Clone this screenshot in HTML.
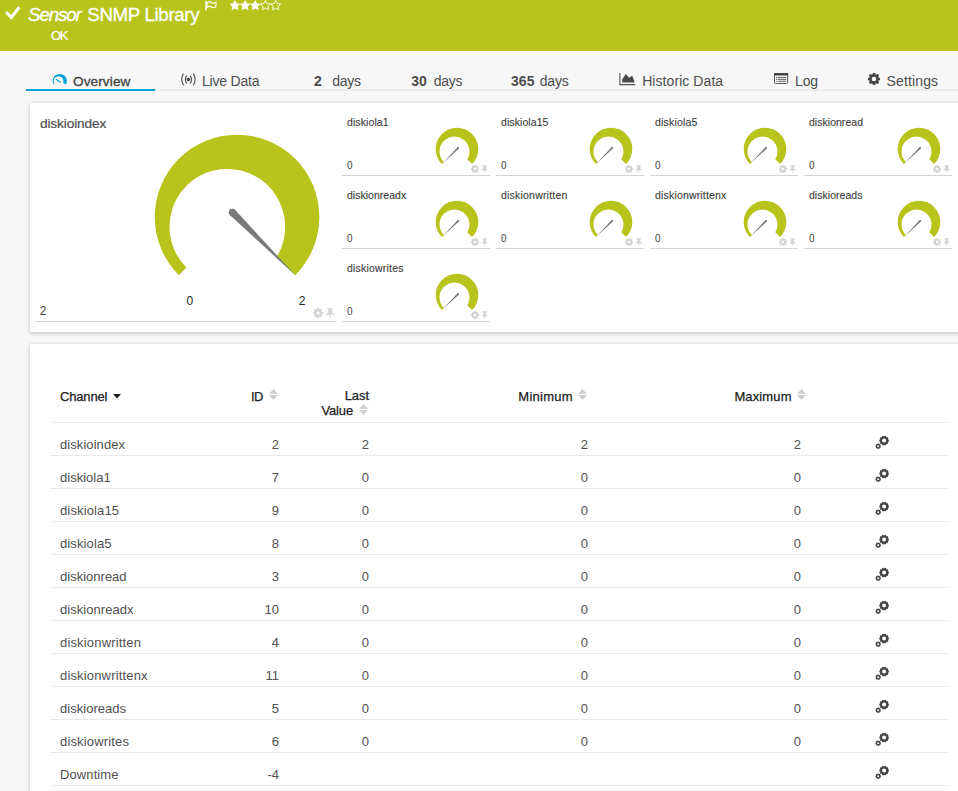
<!DOCTYPE html><html lang="en"><head><meta charset="utf-8"><title>Sensor SNMP Library</title><style>
*{box-sizing:border-box;margin:0;padding:0}
html,body{width:958px;height:791px;overflow:hidden}
body{background:#f7f7f7;font-family:"Liberation Sans",sans-serif;color:#4a4a4a;position:relative}
.t{position:absolute;white-space:nowrap;line-height:20px}
header{position:absolute;left:0;top:0;width:958px;height:51px;background:#b8c41b;color:#fff}
nav{position:absolute;left:0;top:51px;width:958px;height:40px}
nav .line{position:absolute;left:27px;top:38px;width:931px;height:2px;background:#ebebeb}
nav .active{position:absolute;left:26px;top:38px;width:129px;height:2px;background:#02a3da}
.card{position:absolute;background:#fff;box-shadow:0 1px 4px rgba(0,0,0,.24)}
#gauges{left:30px;top:103px;width:940px;height:229px}
#channels{left:30px;top:344px;width:940px;height:470px}
.uline{position:absolute;height:1px;background:#d1d3d5}
svg{position:absolute;overflow:visible}
table{position:absolute;left:20px;top:0;width:898px;border-collapse:collapse;table-layout:fixed;font-size:13px;color:#505050}
th,td{border-bottom:1px solid #e9e9e9;padding:0;white-space:nowrap;vertical-align:top;position:relative}
thead th{height:78.5px;font-weight:normal;color:#222;-webkit-text-stroke:.25px #222}
tbody td{height:33px}
</style></head><body>
<header>
<svg width="18" height="16" style="left:4px;top:6px" viewBox="0 0 18 16"><path d="M2.1 6.1 L7.4 11.5 L15.2 1.2" fill="none" stroke="#fff" stroke-width="3.1"/></svg>
<span class="t" style="top:4.90px;font-size:18.7px;left:28.00px;font-style:italic;letter-spacing:-1.075px;-webkit-text-stroke:.3px #fff;">Sensor</span>
<span class="t" style="top:4.90px;font-size:18.7px;left:87.30px;letter-spacing:-0.337px;-webkit-text-stroke:.3px #fff;">SNMP Library</span>
<svg width="12" height="11" style="left:205px;top:1px" viewBox="0 0 12 11"><path d="M1 0 V9.4" stroke="#fff" stroke-width="1.4" fill="none"/><path d="M2.1 1.7 C3.6 0.5 5.4 0.7 6.8 1.7 C8.1 2.6 9.6 2.2 10.9 1.2 V5.7 C9.6 6.7 8.1 7.1 6.8 6.2 C5.4 5.2 3.6 5 2.1 6.2 Z" fill="none" stroke="#fff" stroke-width="1.1"/></svg>
<svg width="60" height="12" style="left:228px;top:0px;overflow:hidden" viewBox="0 0 60 12"><polygon points="6.90,-0.10 8.60,3.25 12.32,3.84 9.66,6.50 10.25,10.21 6.90,8.50 3.55,10.21 4.14,6.50 1.48,3.84 5.20,3.25" fill="#fff"/><polygon points="17.10,-0.10 18.80,3.25 22.52,3.84 19.86,6.50 20.45,10.21 17.10,8.50 13.75,10.21 14.34,6.50 11.68,3.84 15.40,3.25" fill="#fff"/><polygon points="27.30,-0.10 29.00,3.25 32.72,3.84 30.06,6.50 30.65,10.21 27.30,8.50 23.95,10.21 24.54,6.50 21.88,3.84 25.60,3.25" fill="#fff"/><polygon points="37.50,0.40 39.03,3.50 42.45,3.99 39.97,6.40 40.56,9.81 37.50,8.20 34.44,9.81 35.03,6.40 32.55,3.99 35.97,3.50" fill="none" stroke="#fff" stroke-width="0.9"/><polygon points="47.70,0.40 49.23,3.50 52.65,3.99 50.17,6.40 50.76,9.81 47.70,8.20 44.64,9.81 45.23,6.40 42.75,3.99 46.17,3.50" fill="none" stroke="#fff" stroke-width="0.9"/></svg>
<span class="t" style="top:25.90px;font-size:13px;left:51.00px;letter-spacing:-1.391px;-webkit-text-stroke:.2px #fff;">OK</span>
</header>
<nav>
<div class="line"></div><div class="active"></div>
<span class="t" style="top:20.80px;font-size:13.6px;left:73.00px;color:#444;letter-spacing:0.103px;-webkit-text-stroke:.3px #444;">Overview</span>
<span class="t" style="top:20.30px;font-size:14px;left:202.00px;color:#4d4d4d;letter-spacing:-0.216px;">Live Data</span>
<span class="t" style="top:20.30px;font-size:14px;left:314.00px;font-weight:bold;color:#4d4d4d;">2</span>
<span class="t" style="top:20.30px;font-size:14px;left:332.20px;color:#4d4d4d;letter-spacing:-0.218px;">days</span>
<span class="t" style="top:20.30px;font-size:14px;left:411.30px;font-weight:bold;color:#4d4d4d;letter-spacing:-0.036px;">30</span>
<span class="t" style="top:20.30px;font-size:14px;left:433.70px;color:#4d4d4d;letter-spacing:-0.218px;">days</span>
<span class="t" style="top:20.30px;font-size:14px;left:511.00px;font-weight:bold;color:#4d4d4d;letter-spacing:0.047px;">365</span>
<span class="t" style="top:20.30px;font-size:14px;left:539.80px;color:#4d4d4d;letter-spacing:-0.218px;">days</span>
<span class="t" style="top:20.30px;font-size:14px;left:642.20px;color:#4d4d4d;letter-spacing:0.067px;">Historic Data</span>
<span class="t" style="top:20.30px;font-size:14px;left:795.00px;color:#4d4d4d;letter-spacing:-0.120px;">Log</span>
<span class="t" style="top:20.30px;font-size:14px;left:886.60px;color:#4d4d4d;letter-spacing:0.127px;">Settings</span>
<svg width="16" height="14" style="left:52px;top:22px" viewBox="52 73 16 14"><path d="M53.56 84.62 A7.15 7.15 0 1 1 65.94 84.62 L63.13 83.00 A4.90 4.90 0 1 0 54.54 84.06 Z" fill="#02a3da"/><path d="M55.9 79.3 L60.8 82.5" stroke="#02a3da" stroke-width="1.05"/></svg>
<svg width="16" height="13" style="left:180px;top:21.7px" viewBox="180 72.7 16 13"><circle cx="188.4" cy="79.2" r="1.8" fill="#4a4a4a"/><path d="M186.7 75.4 Q183.9 79.2 186.7 83 M190.1 75.4 Q192.9 79.2 190.1 83" fill="none" stroke="#555" stroke-width="1.25"/><path d="M183.5 73.4 Q179.7 79.2 183.5 85 M193.3 73.4 Q197.1 79.2 193.3 85" fill="none" stroke="#555" stroke-width="1.2"/></svg>
<svg width="17" height="13" style="left:619px;top:22.3px" viewBox="0 0 17 13"><path d="M0.9 0 V11.6 H16.3" fill="none" stroke="#555" stroke-width="1.1"/><path d="M3.2 9.6 V6.4 L6.7 1.1 L10.3 4.8 L13.1 2.6 L15.3 7.9 V9.6 Z" fill="#4a4a4a"/></svg>
<svg width="15" height="12" style="left:774.1px;top:21.9px" viewBox="0 0 15 12"><rect x="0.5" y="0.5" width="13.2" height="10" rx="1" fill="none" stroke="#555" stroke-width="1"/><rect x="0" y="0" width="14.2" height="2.5" rx=".8" fill="#444"/><path d="M2 4.5 H3.2 M3.9 4.5 H12.2 M2 6.4 H3.2 M3.9 6.4 H12.2 M2 8.3 H3.2 M3.9 8.3 H12.2" stroke="#555" stroke-width=".9"/></svg>
<svg width="14" height="14" style="left:867.3px;top:20.6px" viewBox="0 0 14 14"><path d="M13.08 5.80 L13.08 8.20 L11.71 8.36 L11.29 9.37 L12.15 10.45 L10.45 12.15 L9.37 11.29 L8.36 11.71 L8.20 13.08 L5.80 13.08 L5.64 11.71 L4.63 11.29 L3.55 12.15 L1.85 10.45 L2.71 9.37 L2.29 8.36 L0.92 8.20 L0.92 5.80 L2.29 5.64 L2.71 4.63 L1.85 3.55 L3.55 1.85 L4.63 2.71 L5.64 2.29 L5.80 0.92 L8.20 0.92 L8.36 2.29 L9.37 2.71 L10.45 1.85 L12.15 3.55 L11.29 4.63 L11.71 5.64 Z M4.70 7.00 a2.30 2.30 0 1 0 4.60 0 a2.30 2.30 0 1 0 -4.60 0 Z" fill="#444" fill-rule="evenodd"/></svg>
</nav>
<section class="card" id="gauges">
<span class="t" style="top:10.50px;font-size:13.7px;left:10.00px;color:#505050;letter-spacing:-0.143px;-webkit-text-stroke:.2px #505050;">diskioindex</span>
<svg width="300" height="200" style="left:0;top:0" viewBox="0 0 300 200">
<path d="M148.86 172.19 A82.30 82.30 0 1 1 265.24 172.19 L246.75 153.70 A57.80 57.80 0 1 0 156.46 164.59 Z" fill="#b8c41b"/>
<path d="M265.74 172.69 L204.96 106.75 L199.80 111.91 Z" fill="#7a7a78"/><circle cx="202.38" cy="109.33" r="3.65" fill="#7a7a78"/>
<text x="159.8" y="202.0" font-size="12" fill="#222" text-anchor="middle">0</text>
<text x="272.2" y="202.0" font-size="12" fill="#222" text-anchor="middle">2</text>
</svg>
<span class="t" style="top:198.00px;font-size:12px;left:9.80px;color:#444;">2</span>
<svg width="22.0" height="10.0" style="left:282.5px;top:205.2px" viewBox="0 0 22 10"><path d="M10.00 4.00 L10.00 6.00 L8.79 6.11 L8.47 6.89 L9.24 7.83 L7.83 9.24 L6.89 8.47 L6.11 8.79 L6.00 10.00 L4.00 10.00 L3.89 8.79 L3.11 8.47 L2.17 9.24 L0.76 7.83 L1.53 6.89 L1.21 6.11 L-0.00 6.00 L-0.00 4.00 L1.21 3.89 L1.53 3.11 L0.76 2.17 L2.17 0.76 L3.11 1.53 L3.89 1.21 L4.00 -0.00 L6.00 -0.00 L6.11 1.21 L6.89 1.53 L7.83 0.76 L9.24 2.17 L8.47 3.11 L8.79 3.89 Z M3.45 5.00 a1.55 1.55 0 1 0 3.10 0 a1.55 1.55 0 1 0 -3.10 0 Z" fill="#d4d4d4" fill-rule="evenodd"/><path d="M14.2 0.2 H20 V1.6 H19 V4.6 C20.2 5.2 20.8 6 20.8 6.8 H17.6 V10 H16.6 V6.8 H13.4 C13.4 6 14 5.2 15.2 4.6 V1.6 H14.2 Z" fill="#d4d4d4"/></svg>
<div class="uline" style="left:5px;top:218px;width:301px"></div>
<div class="uline" style="left:312.0px;top:72.0px;width:147.5px"></div>
<span class="t" style="top:9.00px;font-size:10.5px;left:317.00px;color:#3c3c3c;letter-spacing:0.094px;-webkit-text-stroke:.12px #3c3c3c;">diskiola1</span>
<span class="t" style="top:53.00px;font-size:10px;left:317.00px;color:#444;">0</span>
<svg width="60" height="60" style="left:397.00px;top:15.80px" viewBox="0 0 60 60">
<path d="M14.94 45.06 A21.30 21.30 0 1 1 45.06 45.06 L40.27 40.27 A14.96 14.96 0 1 0 16.91 43.09 Z" fill="#b8c41b"/>
<path d="M15.50 44.50 L31.84 29.43 L30.57 28.16 Z" fill="#707070"/><circle cx="31.20" cy="28.80" r="0.90" fill="#707070"/>
</svg>
<svg width="17.6" height="8.0" style="left:441.0px;top:62.0px" viewBox="0 0 22 10"><path d="M10.00 4.00 L10.00 6.00 L8.79 6.11 L8.47 6.89 L9.24 7.83 L7.83 9.24 L6.89 8.47 L6.11 8.79 L6.00 10.00 L4.00 10.00 L3.89 8.79 L3.11 8.47 L2.17 9.24 L0.76 7.83 L1.53 6.89 L1.21 6.11 L-0.00 6.00 L-0.00 4.00 L1.21 3.89 L1.53 3.11 L0.76 2.17 L2.17 0.76 L3.11 1.53 L3.89 1.21 L4.00 -0.00 L6.00 -0.00 L6.11 1.21 L6.89 1.53 L7.83 0.76 L9.24 2.17 L8.47 3.11 L8.79 3.89 Z M3.45 5.00 a1.55 1.55 0 1 0 3.10 0 a1.55 1.55 0 1 0 -3.10 0 Z" fill="#d4d4d4" fill-rule="evenodd"/><path d="M14.2 0.2 H20 V1.6 H19 V4.6 C20.2 5.2 20.8 6 20.8 6.8 H17.6 V10 H16.6 V6.8 H13.4 C13.4 6 14 5.2 15.2 4.6 V1.6 H14.2 Z" fill="#d4d4d4"/></svg>
<div class="uline" style="left:466.0px;top:72.0px;width:147.5px"></div>
<span class="t" style="top:9.00px;font-size:10.5px;left:471.00px;color:#3c3c3c;letter-spacing:0.080px;-webkit-text-stroke:.12px #3c3c3c;">diskiola15</span>
<span class="t" style="top:53.00px;font-size:10px;left:471.00px;color:#444;">0</span>
<svg width="60" height="60" style="left:551.00px;top:15.80px" viewBox="0 0 60 60">
<path d="M14.94 45.06 A21.30 21.30 0 1 1 45.06 45.06 L40.27 40.27 A14.96 14.96 0 1 0 16.91 43.09 Z" fill="#b8c41b"/>
<path d="M15.50 44.50 L31.84 29.43 L30.57 28.16 Z" fill="#707070"/><circle cx="31.20" cy="28.80" r="0.90" fill="#707070"/>
</svg>
<svg width="17.6" height="8.0" style="left:595.0px;top:62.0px" viewBox="0 0 22 10"><path d="M10.00 4.00 L10.00 6.00 L8.79 6.11 L8.47 6.89 L9.24 7.83 L7.83 9.24 L6.89 8.47 L6.11 8.79 L6.00 10.00 L4.00 10.00 L3.89 8.79 L3.11 8.47 L2.17 9.24 L0.76 7.83 L1.53 6.89 L1.21 6.11 L-0.00 6.00 L-0.00 4.00 L1.21 3.89 L1.53 3.11 L0.76 2.17 L2.17 0.76 L3.11 1.53 L3.89 1.21 L4.00 -0.00 L6.00 -0.00 L6.11 1.21 L6.89 1.53 L7.83 0.76 L9.24 2.17 L8.47 3.11 L8.79 3.89 Z M3.45 5.00 a1.55 1.55 0 1 0 3.10 0 a1.55 1.55 0 1 0 -3.10 0 Z" fill="#d4d4d4" fill-rule="evenodd"/><path d="M14.2 0.2 H20 V1.6 H19 V4.6 C20.2 5.2 20.8 6 20.8 6.8 H17.6 V10 H16.6 V6.8 H13.4 C13.4 6 14 5.2 15.2 4.6 V1.6 H14.2 Z" fill="#d4d4d4"/></svg>
<div class="uline" style="left:620.0px;top:72.0px;width:147.5px"></div>
<span class="t" style="top:9.00px;font-size:10.5px;left:625.00px;color:#3c3c3c;letter-spacing:0.183px;-webkit-text-stroke:.12px #3c3c3c;">diskiola5</span>
<span class="t" style="top:53.00px;font-size:10px;left:625.00px;color:#444;">0</span>
<svg width="60" height="60" style="left:705.00px;top:15.80px" viewBox="0 0 60 60">
<path d="M14.94 45.06 A21.30 21.30 0 1 1 45.06 45.06 L40.27 40.27 A14.96 14.96 0 1 0 16.91 43.09 Z" fill="#b8c41b"/>
<path d="M15.50 44.50 L31.84 29.43 L30.57 28.16 Z" fill="#707070"/><circle cx="31.20" cy="28.80" r="0.90" fill="#707070"/>
</svg>
<svg width="17.6" height="8.0" style="left:749.0px;top:62.0px" viewBox="0 0 22 10"><path d="M10.00 4.00 L10.00 6.00 L8.79 6.11 L8.47 6.89 L9.24 7.83 L7.83 9.24 L6.89 8.47 L6.11 8.79 L6.00 10.00 L4.00 10.00 L3.89 8.79 L3.11 8.47 L2.17 9.24 L0.76 7.83 L1.53 6.89 L1.21 6.11 L-0.00 6.00 L-0.00 4.00 L1.21 3.89 L1.53 3.11 L0.76 2.17 L2.17 0.76 L3.11 1.53 L3.89 1.21 L4.00 -0.00 L6.00 -0.00 L6.11 1.21 L6.89 1.53 L7.83 0.76 L9.24 2.17 L8.47 3.11 L8.79 3.89 Z M3.45 5.00 a1.55 1.55 0 1 0 3.10 0 a1.55 1.55 0 1 0 -3.10 0 Z" fill="#d4d4d4" fill-rule="evenodd"/><path d="M14.2 0.2 H20 V1.6 H19 V4.6 C20.2 5.2 20.8 6 20.8 6.8 H17.6 V10 H16.6 V6.8 H13.4 C13.4 6 14 5.2 15.2 4.6 V1.6 H14.2 Z" fill="#d4d4d4"/></svg>
<div class="uline" style="left:774.0px;top:72.0px;width:147.5px"></div>
<span class="t" style="top:9.00px;font-size:10.5px;left:779.00px;color:#3c3c3c;letter-spacing:0.027px;-webkit-text-stroke:.12px #3c3c3c;">diskionread</span>
<span class="t" style="top:53.00px;font-size:10px;left:779.00px;color:#444;">0</span>
<svg width="60" height="60" style="left:859.00px;top:15.80px" viewBox="0 0 60 60">
<path d="M14.94 45.06 A21.30 21.30 0 1 1 45.06 45.06 L40.27 40.27 A14.96 14.96 0 1 0 16.91 43.09 Z" fill="#b8c41b"/>
<path d="M15.50 44.50 L31.84 29.43 L30.57 28.16 Z" fill="#707070"/><circle cx="31.20" cy="28.80" r="0.90" fill="#707070"/>
</svg>
<svg width="17.6" height="8.0" style="left:903.0px;top:62.0px" viewBox="0 0 22 10"><path d="M10.00 4.00 L10.00 6.00 L8.79 6.11 L8.47 6.89 L9.24 7.83 L7.83 9.24 L6.89 8.47 L6.11 8.79 L6.00 10.00 L4.00 10.00 L3.89 8.79 L3.11 8.47 L2.17 9.24 L0.76 7.83 L1.53 6.89 L1.21 6.11 L-0.00 6.00 L-0.00 4.00 L1.21 3.89 L1.53 3.11 L0.76 2.17 L2.17 0.76 L3.11 1.53 L3.89 1.21 L4.00 -0.00 L6.00 -0.00 L6.11 1.21 L6.89 1.53 L7.83 0.76 L9.24 2.17 L8.47 3.11 L8.79 3.89 Z M3.45 5.00 a1.55 1.55 0 1 0 3.10 0 a1.55 1.55 0 1 0 -3.10 0 Z" fill="#d4d4d4" fill-rule="evenodd"/><path d="M14.2 0.2 H20 V1.6 H19 V4.6 C20.2 5.2 20.8 6 20.8 6.8 H17.6 V10 H16.6 V6.8 H13.4 C13.4 6 14 5.2 15.2 4.6 V1.6 H14.2 Z" fill="#d4d4d4"/></svg>
<div class="uline" style="left:312.0px;top:145.0px;width:147.5px"></div>
<span class="t" style="top:82.00px;font-size:10.5px;left:317.00px;color:#3c3c3c;letter-spacing:0.021px;-webkit-text-stroke:.12px #3c3c3c;">diskionreadx</span>
<span class="t" style="top:126.00px;font-size:10px;left:317.00px;color:#444;">0</span>
<svg width="60" height="60" style="left:397.00px;top:88.80px" viewBox="0 0 60 60">
<path d="M14.94 45.06 A21.30 21.30 0 1 1 45.06 45.06 L40.27 40.27 A14.96 14.96 0 1 0 16.91 43.09 Z" fill="#b8c41b"/>
<path d="M15.50 44.50 L31.84 29.43 L30.57 28.16 Z" fill="#707070"/><circle cx="31.20" cy="28.80" r="0.90" fill="#707070"/>
</svg>
<svg width="17.6" height="8.0" style="left:441.0px;top:135.0px" viewBox="0 0 22 10"><path d="M10.00 4.00 L10.00 6.00 L8.79 6.11 L8.47 6.89 L9.24 7.83 L7.83 9.24 L6.89 8.47 L6.11 8.79 L6.00 10.00 L4.00 10.00 L3.89 8.79 L3.11 8.47 L2.17 9.24 L0.76 7.83 L1.53 6.89 L1.21 6.11 L-0.00 6.00 L-0.00 4.00 L1.21 3.89 L1.53 3.11 L0.76 2.17 L2.17 0.76 L3.11 1.53 L3.89 1.21 L4.00 -0.00 L6.00 -0.00 L6.11 1.21 L6.89 1.53 L7.83 0.76 L9.24 2.17 L8.47 3.11 L8.79 3.89 Z M3.45 5.00 a1.55 1.55 0 1 0 3.10 0 a1.55 1.55 0 1 0 -3.10 0 Z" fill="#d4d4d4" fill-rule="evenodd"/><path d="M14.2 0.2 H20 V1.6 H19 V4.6 C20.2 5.2 20.8 6 20.8 6.8 H17.6 V10 H16.6 V6.8 H13.4 C13.4 6 14 5.2 15.2 4.6 V1.6 H14.2 Z" fill="#d4d4d4"/></svg>
<div class="uline" style="left:466.0px;top:145.0px;width:147.5px"></div>
<span class="t" style="top:82.00px;font-size:10.5px;left:471.00px;color:#3c3c3c;letter-spacing:0.206px;-webkit-text-stroke:.12px #3c3c3c;">diskionwritten</span>
<span class="t" style="top:126.00px;font-size:10px;left:471.00px;color:#444;">0</span>
<svg width="60" height="60" style="left:551.00px;top:88.80px" viewBox="0 0 60 60">
<path d="M14.94 45.06 A21.30 21.30 0 1 1 45.06 45.06 L40.27 40.27 A14.96 14.96 0 1 0 16.91 43.09 Z" fill="#b8c41b"/>
<path d="M15.50 44.50 L31.84 29.43 L30.57 28.16 Z" fill="#707070"/><circle cx="31.20" cy="28.80" r="0.90" fill="#707070"/>
</svg>
<svg width="17.6" height="8.0" style="left:595.0px;top:135.0px" viewBox="0 0 22 10"><path d="M10.00 4.00 L10.00 6.00 L8.79 6.11 L8.47 6.89 L9.24 7.83 L7.83 9.24 L6.89 8.47 L6.11 8.79 L6.00 10.00 L4.00 10.00 L3.89 8.79 L3.11 8.47 L2.17 9.24 L0.76 7.83 L1.53 6.89 L1.21 6.11 L-0.00 6.00 L-0.00 4.00 L1.21 3.89 L1.53 3.11 L0.76 2.17 L2.17 0.76 L3.11 1.53 L3.89 1.21 L4.00 -0.00 L6.00 -0.00 L6.11 1.21 L6.89 1.53 L7.83 0.76 L9.24 2.17 L8.47 3.11 L8.79 3.89 Z M3.45 5.00 a1.55 1.55 0 1 0 3.10 0 a1.55 1.55 0 1 0 -3.10 0 Z" fill="#d4d4d4" fill-rule="evenodd"/><path d="M14.2 0.2 H20 V1.6 H19 V4.6 C20.2 5.2 20.8 6 20.8 6.8 H17.6 V10 H16.6 V6.8 H13.4 C13.4 6 14 5.2 15.2 4.6 V1.6 H14.2 Z" fill="#d4d4d4"/></svg>
<div class="uline" style="left:620.0px;top:145.0px;width:147.5px"></div>
<span class="t" style="top:82.00px;font-size:10.5px;left:625.00px;color:#3c3c3c;letter-spacing:0.176px;-webkit-text-stroke:.12px #3c3c3c;">diskionwrittenx</span>
<span class="t" style="top:126.00px;font-size:10px;left:625.00px;color:#444;">0</span>
<svg width="60" height="60" style="left:705.00px;top:88.80px" viewBox="0 0 60 60">
<path d="M14.94 45.06 A21.30 21.30 0 1 1 45.06 45.06 L40.27 40.27 A14.96 14.96 0 1 0 16.91 43.09 Z" fill="#b8c41b"/>
<path d="M15.50 44.50 L31.84 29.43 L30.57 28.16 Z" fill="#707070"/><circle cx="31.20" cy="28.80" r="0.90" fill="#707070"/>
</svg>
<svg width="17.6" height="8.0" style="left:749.0px;top:135.0px" viewBox="0 0 22 10"><path d="M10.00 4.00 L10.00 6.00 L8.79 6.11 L8.47 6.89 L9.24 7.83 L7.83 9.24 L6.89 8.47 L6.11 8.79 L6.00 10.00 L4.00 10.00 L3.89 8.79 L3.11 8.47 L2.17 9.24 L0.76 7.83 L1.53 6.89 L1.21 6.11 L-0.00 6.00 L-0.00 4.00 L1.21 3.89 L1.53 3.11 L0.76 2.17 L2.17 0.76 L3.11 1.53 L3.89 1.21 L4.00 -0.00 L6.00 -0.00 L6.11 1.21 L6.89 1.53 L7.83 0.76 L9.24 2.17 L8.47 3.11 L8.79 3.89 Z M3.45 5.00 a1.55 1.55 0 1 0 3.10 0 a1.55 1.55 0 1 0 -3.10 0 Z" fill="#d4d4d4" fill-rule="evenodd"/><path d="M14.2 0.2 H20 V1.6 H19 V4.6 C20.2 5.2 20.8 6 20.8 6.8 H17.6 V10 H16.6 V6.8 H13.4 C13.4 6 14 5.2 15.2 4.6 V1.6 H14.2 Z" fill="#d4d4d4"/></svg>
<div class="uline" style="left:774.0px;top:145.0px;width:147.5px"></div>
<span class="t" style="top:82.00px;font-size:10.5px;left:779.00px;color:#3c3c3c;letter-spacing:0.035px;-webkit-text-stroke:.12px #3c3c3c;">diskioreads</span>
<span class="t" style="top:126.00px;font-size:10px;left:779.00px;color:#444;">0</span>
<svg width="60" height="60" style="left:859.00px;top:88.80px" viewBox="0 0 60 60">
<path d="M14.94 45.06 A21.30 21.30 0 1 1 45.06 45.06 L40.27 40.27 A14.96 14.96 0 1 0 16.91 43.09 Z" fill="#b8c41b"/>
<path d="M15.50 44.50 L31.84 29.43 L30.57 28.16 Z" fill="#707070"/><circle cx="31.20" cy="28.80" r="0.90" fill="#707070"/>
</svg>
<svg width="17.6" height="8.0" style="left:903.0px;top:135.0px" viewBox="0 0 22 10"><path d="M10.00 4.00 L10.00 6.00 L8.79 6.11 L8.47 6.89 L9.24 7.83 L7.83 9.24 L6.89 8.47 L6.11 8.79 L6.00 10.00 L4.00 10.00 L3.89 8.79 L3.11 8.47 L2.17 9.24 L0.76 7.83 L1.53 6.89 L1.21 6.11 L-0.00 6.00 L-0.00 4.00 L1.21 3.89 L1.53 3.11 L0.76 2.17 L2.17 0.76 L3.11 1.53 L3.89 1.21 L4.00 -0.00 L6.00 -0.00 L6.11 1.21 L6.89 1.53 L7.83 0.76 L9.24 2.17 L8.47 3.11 L8.79 3.89 Z M3.45 5.00 a1.55 1.55 0 1 0 3.10 0 a1.55 1.55 0 1 0 -3.10 0 Z" fill="#d4d4d4" fill-rule="evenodd"/><path d="M14.2 0.2 H20 V1.6 H19 V4.6 C20.2 5.2 20.8 6 20.8 6.8 H17.6 V10 H16.6 V6.8 H13.4 C13.4 6 14 5.2 15.2 4.6 V1.6 H14.2 Z" fill="#d4d4d4"/></svg>
<div class="uline" style="left:312.0px;top:218.0px;width:147.5px"></div>
<span class="t" style="top:155.00px;font-size:10.5px;left:317.00px;color:#3c3c3c;letter-spacing:0.203px;-webkit-text-stroke:.12px #3c3c3c;">diskiowrites</span>
<span class="t" style="top:199.00px;font-size:10px;left:317.00px;color:#444;">0</span>
<svg width="60" height="60" style="left:397.00px;top:161.80px" viewBox="0 0 60 60">
<path d="M14.94 45.06 A21.30 21.30 0 1 1 45.06 45.06 L40.27 40.27 A14.96 14.96 0 1 0 16.91 43.09 Z" fill="#b8c41b"/>
<path d="M15.50 44.50 L31.84 29.43 L30.57 28.16 Z" fill="#707070"/><circle cx="31.20" cy="28.80" r="0.90" fill="#707070"/>
</svg>
<svg width="17.6" height="8.0" style="left:441.0px;top:208.0px" viewBox="0 0 22 10"><path d="M10.00 4.00 L10.00 6.00 L8.79 6.11 L8.47 6.89 L9.24 7.83 L7.83 9.24 L6.89 8.47 L6.11 8.79 L6.00 10.00 L4.00 10.00 L3.89 8.79 L3.11 8.47 L2.17 9.24 L0.76 7.83 L1.53 6.89 L1.21 6.11 L-0.00 6.00 L-0.00 4.00 L1.21 3.89 L1.53 3.11 L0.76 2.17 L2.17 0.76 L3.11 1.53 L3.89 1.21 L4.00 -0.00 L6.00 -0.00 L6.11 1.21 L6.89 1.53 L7.83 0.76 L9.24 2.17 L8.47 3.11 L8.79 3.89 Z M3.45 5.00 a1.55 1.55 0 1 0 3.10 0 a1.55 1.55 0 1 0 -3.10 0 Z" fill="#d4d4d4" fill-rule="evenodd"/><path d="M14.2 0.2 H20 V1.6 H19 V4.6 C20.2 5.2 20.8 6 20.8 6.8 H17.6 V10 H16.6 V6.8 H13.4 C13.4 6 14 5.2 15.2 4.6 V1.6 H14.2 Z" fill="#d4d4d4"/></svg>
</section>
<section class="card" id="channels">
<table><colgroup><col style="width:160px"><col style="width:69px"><col style="width:90px"><col style="width:219px"><col style="width:218px"><col style="width:142px"></colgroup>
<thead><tr>
<th style="text-align:left;padding:44.5px 0 0 10px"><span style="letter-spacing:-0.175px;margin-right:0.175px">Channel</span><svg width="8" height="5" style="position:relative;display:inline-block;vertical-align:1.5px;margin-left:5.5px" viewBox="0 0 8 5"><path d="M0 0 L8 0 L4 4.4 Z" fill="#222"/></svg></th>
<th style="text-align:right;padding:44.5px 1px 0 0"><span style="letter-spacing:-0.500px;margin-right:0.500px">ID</span><svg width="9" height="11" style="position:relative;display:inline-block;vertical-align:0.3px;margin-left:5.5px" viewBox="0 0 9 11"><path d="M0 4.9 L4.5 0 L9 4.9 Z M0 6.1 L4.5 11 L9 6.1 Z" fill="#cfcfcf"/></svg></th>
<th style="text-align:right;padding:45.3px 1.4px 0 0;line-height:14.5px"><span style="margin-right:-1.4px"><span style="letter-spacing:-0.093px;margin-right:0.093px">Last</span></span><br><span style="letter-spacing:-0.137px;margin-right:0.137px">Value</span><svg width="9" height="11" style="position:relative;display:inline-block;vertical-align:0.3px;margin-left:5.5px" viewBox="0 0 9 11"><path d="M0 4.9 L4.5 0 L9 4.9 Z M0 6.1 L4.5 11 L9 6.1 Z" fill="#cfcfcf"/></svg></th>
<th style="text-align:right;padding:44.5px 0.9px 0 0"><span style="letter-spacing:0.254px;margin-right:-0.254px">Minimum</span><svg width="9" height="11" style="position:relative;display:inline-block;vertical-align:0.3px;margin-left:5.5px" viewBox="0 0 9 11"><path d="M0 4.9 L4.5 0 L9 4.9 Z M0 6.1 L4.5 11 L9 6.1 Z" fill="#cfcfcf"/></svg></th>
<th style="text-align:right;padding:44.5px 0 0 0"><span style="letter-spacing:0.123px;margin-right:-0.123px">Maximum</span><svg width="9" height="11" style="position:relative;display:inline-block;vertical-align:0.3px;margin-left:5.5px" viewBox="0 0 9 11"><path d="M0 4.9 L4.5 0 L9 4.9 Z M0 6.1 L4.5 11 L9 6.1 Z" fill="#cfcfcf"/></svg></th>
<th></th>
</tr></thead><tbody>
<tr><td style="padding:13.5px 0 0 10px"><span style="letter-spacing:0.071px">diskioindex</span></td><td style="text-align:right;padding:13.5px 0 0">2</td><td style="text-align:right;padding:13.5px 0 0">2</td><td style="text-align:right;padding:13.5px 0 0">2</td><td style="text-align:right;padding:13.5px 5px 0 0">2</td><td><svg width="16" height="16" style="left:67px;top:11px" viewBox="0 0 16 16"><path d="M15.93 5.77 L15.93 7.43 L15.08 7.59 L14.90 8.13 L15.49 8.77 L14.52 10.11 L13.73 9.74 L13.28 10.08 L13.38 10.94 L11.81 11.45 L11.38 10.69 L10.82 10.69 L10.39 11.45 L8.82 10.94 L8.92 10.08 L8.47 9.74 L7.68 10.11 L6.71 8.77 L7.30 8.13 L7.12 7.59 L6.27 7.43 L6.27 5.77 L7.12 5.61 L7.30 5.07 L6.71 4.43 L7.68 3.09 L8.47 3.46 L8.92 3.12 L8.82 2.26 L10.39 1.75 L10.82 2.51 L11.38 2.51 L11.81 1.75 L13.38 2.26 L13.28 3.12 L13.73 3.46 L14.52 3.09 L15.49 4.43 L14.90 5.07 L15.08 5.61 Z M9.10 6.60 a2.00 2.00 0 1 0 4.00 0 a2.00 2.00 0 1 0 -4.00 0 Z" fill="#444" fill-rule="evenodd"/><path d="M7.94 11.61 L7.94 12.79 L7.35 12.88 L7.20 13.24 L7.55 13.72 L6.72 14.55 L6.24 14.20 L5.88 14.35 L5.79 14.94 L4.61 14.94 L4.52 14.35 L4.16 14.20 L3.68 14.55 L2.85 13.72 L3.20 13.24 L3.05 12.88 L2.46 12.79 L2.46 11.61 L3.05 11.52 L3.20 11.16 L2.85 10.68 L3.68 9.85 L4.16 10.20 L4.52 10.05 L4.61 9.46 L5.79 9.46 L5.88 10.05 L6.24 10.20 L6.72 9.85 L7.55 10.68 L7.20 11.16 L7.35 11.52 Z M4.20 12.20 a1.00 1.00 0 1 0 2.00 0 a1.00 1.00 0 1 0 -2.00 0 Z" fill="#444" fill-rule="evenodd"/></svg></td></tr>
<tr><td style="padding:13.5px 0 0 10px"><span style="letter-spacing:0.013px">diskiola1</span></td><td style="text-align:right;padding:13.5px 0 0">7</td><td style="text-align:right;padding:13.5px 0 0">0</td><td style="text-align:right;padding:13.5px 0 0">0</td><td style="text-align:right;padding:13.5px 5px 0 0">0</td><td><svg width="16" height="16" style="left:67px;top:11px" viewBox="0 0 16 16"><path d="M15.93 5.77 L15.93 7.43 L15.08 7.59 L14.90 8.13 L15.49 8.77 L14.52 10.11 L13.73 9.74 L13.28 10.08 L13.38 10.94 L11.81 11.45 L11.38 10.69 L10.82 10.69 L10.39 11.45 L8.82 10.94 L8.92 10.08 L8.47 9.74 L7.68 10.11 L6.71 8.77 L7.30 8.13 L7.12 7.59 L6.27 7.43 L6.27 5.77 L7.12 5.61 L7.30 5.07 L6.71 4.43 L7.68 3.09 L8.47 3.46 L8.92 3.12 L8.82 2.26 L10.39 1.75 L10.82 2.51 L11.38 2.51 L11.81 1.75 L13.38 2.26 L13.28 3.12 L13.73 3.46 L14.52 3.09 L15.49 4.43 L14.90 5.07 L15.08 5.61 Z M9.10 6.60 a2.00 2.00 0 1 0 4.00 0 a2.00 2.00 0 1 0 -4.00 0 Z" fill="#444" fill-rule="evenodd"/><path d="M7.94 11.61 L7.94 12.79 L7.35 12.88 L7.20 13.24 L7.55 13.72 L6.72 14.55 L6.24 14.20 L5.88 14.35 L5.79 14.94 L4.61 14.94 L4.52 14.35 L4.16 14.20 L3.68 14.55 L2.85 13.72 L3.20 13.24 L3.05 12.88 L2.46 12.79 L2.46 11.61 L3.05 11.52 L3.20 11.16 L2.85 10.68 L3.68 9.85 L4.16 10.20 L4.52 10.05 L4.61 9.46 L5.79 9.46 L5.88 10.05 L6.24 10.20 L6.72 9.85 L7.55 10.68 L7.20 11.16 L7.35 11.52 Z M4.20 12.20 a1.00 1.00 0 1 0 2.00 0 a1.00 1.00 0 1 0 -2.00 0 Z" fill="#444" fill-rule="evenodd"/></svg></td></tr>
<tr><td style="padding:13.5px 0 0 10px"><span style="letter-spacing:0.129px">diskiola15</span></td><td style="text-align:right;padding:13.5px 0 0">9</td><td style="text-align:right;padding:13.5px 0 0">0</td><td style="text-align:right;padding:13.5px 0 0">0</td><td style="text-align:right;padding:13.5px 5px 0 0">0</td><td><svg width="16" height="16" style="left:67px;top:11px" viewBox="0 0 16 16"><path d="M15.93 5.77 L15.93 7.43 L15.08 7.59 L14.90 8.13 L15.49 8.77 L14.52 10.11 L13.73 9.74 L13.28 10.08 L13.38 10.94 L11.81 11.45 L11.38 10.69 L10.82 10.69 L10.39 11.45 L8.82 10.94 L8.92 10.08 L8.47 9.74 L7.68 10.11 L6.71 8.77 L7.30 8.13 L7.12 7.59 L6.27 7.43 L6.27 5.77 L7.12 5.61 L7.30 5.07 L6.71 4.43 L7.68 3.09 L8.47 3.46 L8.92 3.12 L8.82 2.26 L10.39 1.75 L10.82 2.51 L11.38 2.51 L11.81 1.75 L13.38 2.26 L13.28 3.12 L13.73 3.46 L14.52 3.09 L15.49 4.43 L14.90 5.07 L15.08 5.61 Z M9.10 6.60 a2.00 2.00 0 1 0 4.00 0 a2.00 2.00 0 1 0 -4.00 0 Z" fill="#444" fill-rule="evenodd"/><path d="M7.94 11.61 L7.94 12.79 L7.35 12.88 L7.20 13.24 L7.55 13.72 L6.72 14.55 L6.24 14.20 L5.88 14.35 L5.79 14.94 L4.61 14.94 L4.52 14.35 L4.16 14.20 L3.68 14.55 L2.85 13.72 L3.20 13.24 L3.05 12.88 L2.46 12.79 L2.46 11.61 L3.05 11.52 L3.20 11.16 L2.85 10.68 L3.68 9.85 L4.16 10.20 L4.52 10.05 L4.61 9.46 L5.79 9.46 L5.88 10.05 L6.24 10.20 L6.72 9.85 L7.55 10.68 L7.20 11.16 L7.35 11.52 Z M4.20 12.20 a1.00 1.00 0 1 0 2.00 0 a1.00 1.00 0 1 0 -2.00 0 Z" fill="#444" fill-rule="evenodd"/></svg></td></tr>
<tr><td style="padding:13.5px 0 0 10px"><span style="letter-spacing:0.113px">diskiola5</span></td><td style="text-align:right;padding:13.5px 0 0">8</td><td style="text-align:right;padding:13.5px 0 0">0</td><td style="text-align:right;padding:13.5px 0 0">0</td><td style="text-align:right;padding:13.5px 5px 0 0">0</td><td><svg width="16" height="16" style="left:67px;top:11px" viewBox="0 0 16 16"><path d="M15.93 5.77 L15.93 7.43 L15.08 7.59 L14.90 8.13 L15.49 8.77 L14.52 10.11 L13.73 9.74 L13.28 10.08 L13.38 10.94 L11.81 11.45 L11.38 10.69 L10.82 10.69 L10.39 11.45 L8.82 10.94 L8.92 10.08 L8.47 9.74 L7.68 10.11 L6.71 8.77 L7.30 8.13 L7.12 7.59 L6.27 7.43 L6.27 5.77 L7.12 5.61 L7.30 5.07 L6.71 4.43 L7.68 3.09 L8.47 3.46 L8.92 3.12 L8.82 2.26 L10.39 1.75 L10.82 2.51 L11.38 2.51 L11.81 1.75 L13.38 2.26 L13.28 3.12 L13.73 3.46 L14.52 3.09 L15.49 4.43 L14.90 5.07 L15.08 5.61 Z M9.10 6.60 a2.00 2.00 0 1 0 4.00 0 a2.00 2.00 0 1 0 -4.00 0 Z" fill="#444" fill-rule="evenodd"/><path d="M7.94 11.61 L7.94 12.79 L7.35 12.88 L7.20 13.24 L7.55 13.72 L6.72 14.55 L6.24 14.20 L5.88 14.35 L5.79 14.94 L4.61 14.94 L4.52 14.35 L4.16 14.20 L3.68 14.55 L2.85 13.72 L3.20 13.24 L3.05 12.88 L2.46 12.79 L2.46 11.61 L3.05 11.52 L3.20 11.16 L2.85 10.68 L3.68 9.85 L4.16 10.20 L4.52 10.05 L4.61 9.46 L5.79 9.46 L5.88 10.05 L6.24 10.20 L6.72 9.85 L7.55 10.68 L7.20 11.16 L7.35 11.52 Z M4.20 12.20 a1.00 1.00 0 1 0 2.00 0 a1.00 1.00 0 1 0 -2.00 0 Z" fill="#444" fill-rule="evenodd"/></svg></td></tr>
<tr><td style="padding:13.5px 0 0 10px"><span style="letter-spacing:0.010px">diskionread</span></td><td style="text-align:right;padding:13.5px 0 0">3</td><td style="text-align:right;padding:13.5px 0 0">0</td><td style="text-align:right;padding:13.5px 0 0">0</td><td style="text-align:right;padding:13.5px 5px 0 0">0</td><td><svg width="16" height="16" style="left:67px;top:11px" viewBox="0 0 16 16"><path d="M15.93 5.77 L15.93 7.43 L15.08 7.59 L14.90 8.13 L15.49 8.77 L14.52 10.11 L13.73 9.74 L13.28 10.08 L13.38 10.94 L11.81 11.45 L11.38 10.69 L10.82 10.69 L10.39 11.45 L8.82 10.94 L8.92 10.08 L8.47 9.74 L7.68 10.11 L6.71 8.77 L7.30 8.13 L7.12 7.59 L6.27 7.43 L6.27 5.77 L7.12 5.61 L7.30 5.07 L6.71 4.43 L7.68 3.09 L8.47 3.46 L8.92 3.12 L8.82 2.26 L10.39 1.75 L10.82 2.51 L11.38 2.51 L11.81 1.75 L13.38 2.26 L13.28 3.12 L13.73 3.46 L14.52 3.09 L15.49 4.43 L14.90 5.07 L15.08 5.61 Z M9.10 6.60 a2.00 2.00 0 1 0 4.00 0 a2.00 2.00 0 1 0 -4.00 0 Z" fill="#444" fill-rule="evenodd"/><path d="M7.94 11.61 L7.94 12.79 L7.35 12.88 L7.20 13.24 L7.55 13.72 L6.72 14.55 L6.24 14.20 L5.88 14.35 L5.79 14.94 L4.61 14.94 L4.52 14.35 L4.16 14.20 L3.68 14.55 L2.85 13.72 L3.20 13.24 L3.05 12.88 L2.46 12.79 L2.46 11.61 L3.05 11.52 L3.20 11.16 L2.85 10.68 L3.68 9.85 L4.16 10.20 L4.52 10.05 L4.61 9.46 L5.79 9.46 L5.88 10.05 L6.24 10.20 L6.72 9.85 L7.55 10.68 L7.20 11.16 L7.35 11.52 Z M4.20 12.20 a1.00 1.00 0 1 0 2.00 0 a1.00 1.00 0 1 0 -2.00 0 Z" fill="#444" fill-rule="evenodd"/></svg></td></tr>
<tr><td style="padding:13.5px 0 0 10px"><span style="letter-spacing:0.051px">diskionreadx</span></td><td style="text-align:right;padding:13.5px 0 0">10</td><td style="text-align:right;padding:13.5px 0 0">0</td><td style="text-align:right;padding:13.5px 0 0">0</td><td style="text-align:right;padding:13.5px 5px 0 0">0</td><td><svg width="16" height="16" style="left:67px;top:11px" viewBox="0 0 16 16"><path d="M15.93 5.77 L15.93 7.43 L15.08 7.59 L14.90 8.13 L15.49 8.77 L14.52 10.11 L13.73 9.74 L13.28 10.08 L13.38 10.94 L11.81 11.45 L11.38 10.69 L10.82 10.69 L10.39 11.45 L8.82 10.94 L8.92 10.08 L8.47 9.74 L7.68 10.11 L6.71 8.77 L7.30 8.13 L7.12 7.59 L6.27 7.43 L6.27 5.77 L7.12 5.61 L7.30 5.07 L6.71 4.43 L7.68 3.09 L8.47 3.46 L8.92 3.12 L8.82 2.26 L10.39 1.75 L10.82 2.51 L11.38 2.51 L11.81 1.75 L13.38 2.26 L13.28 3.12 L13.73 3.46 L14.52 3.09 L15.49 4.43 L14.90 5.07 L15.08 5.61 Z M9.10 6.60 a2.00 2.00 0 1 0 4.00 0 a2.00 2.00 0 1 0 -4.00 0 Z" fill="#444" fill-rule="evenodd"/><path d="M7.94 11.61 L7.94 12.79 L7.35 12.88 L7.20 13.24 L7.55 13.72 L6.72 14.55 L6.24 14.20 L5.88 14.35 L5.79 14.94 L4.61 14.94 L4.52 14.35 L4.16 14.20 L3.68 14.55 L2.85 13.72 L3.20 13.24 L3.05 12.88 L2.46 12.79 L2.46 11.61 L3.05 11.52 L3.20 11.16 L2.85 10.68 L3.68 9.85 L4.16 10.20 L4.52 10.05 L4.61 9.46 L5.79 9.46 L5.88 10.05 L6.24 10.20 L6.72 9.85 L7.55 10.68 L7.20 11.16 L7.35 11.52 Z M4.20 12.20 a1.00 1.00 0 1 0 2.00 0 a1.00 1.00 0 1 0 -2.00 0 Z" fill="#444" fill-rule="evenodd"/></svg></td></tr>
<tr><td style="padding:13.5px 0 0 10px"><span style="letter-spacing:0.167px">diskionwritten</span></td><td style="text-align:right;padding:13.5px 0 0">4</td><td style="text-align:right;padding:13.5px 0 0">0</td><td style="text-align:right;padding:13.5px 0 0">0</td><td style="text-align:right;padding:13.5px 5px 0 0">0</td><td><svg width="16" height="16" style="left:67px;top:11px" viewBox="0 0 16 16"><path d="M15.93 5.77 L15.93 7.43 L15.08 7.59 L14.90 8.13 L15.49 8.77 L14.52 10.11 L13.73 9.74 L13.28 10.08 L13.38 10.94 L11.81 11.45 L11.38 10.69 L10.82 10.69 L10.39 11.45 L8.82 10.94 L8.92 10.08 L8.47 9.74 L7.68 10.11 L6.71 8.77 L7.30 8.13 L7.12 7.59 L6.27 7.43 L6.27 5.77 L7.12 5.61 L7.30 5.07 L6.71 4.43 L7.68 3.09 L8.47 3.46 L8.92 3.12 L8.82 2.26 L10.39 1.75 L10.82 2.51 L11.38 2.51 L11.81 1.75 L13.38 2.26 L13.28 3.12 L13.73 3.46 L14.52 3.09 L15.49 4.43 L14.90 5.07 L15.08 5.61 Z M9.10 6.60 a2.00 2.00 0 1 0 4.00 0 a2.00 2.00 0 1 0 -4.00 0 Z" fill="#444" fill-rule="evenodd"/><path d="M7.94 11.61 L7.94 12.79 L7.35 12.88 L7.20 13.24 L7.55 13.72 L6.72 14.55 L6.24 14.20 L5.88 14.35 L5.79 14.94 L4.61 14.94 L4.52 14.35 L4.16 14.20 L3.68 14.55 L2.85 13.72 L3.20 13.24 L3.05 12.88 L2.46 12.79 L2.46 11.61 L3.05 11.52 L3.20 11.16 L2.85 10.68 L3.68 9.85 L4.16 10.20 L4.52 10.05 L4.61 9.46 L5.79 9.46 L5.88 10.05 L6.24 10.20 L6.72 9.85 L7.55 10.68 L7.20 11.16 L7.35 11.52 Z M4.20 12.20 a1.00 1.00 0 1 0 2.00 0 a1.00 1.00 0 1 0 -2.00 0 Z" fill="#444" fill-rule="evenodd"/></svg></td></tr>
<tr><td style="padding:13.5px 0 0 10px"><span style="letter-spacing:0.163px">diskionwrittenx</span></td><td style="text-align:right;padding:13.5px 0 0">11</td><td style="text-align:right;padding:13.5px 0 0">0</td><td style="text-align:right;padding:13.5px 0 0">0</td><td style="text-align:right;padding:13.5px 5px 0 0">0</td><td><svg width="16" height="16" style="left:67px;top:11px" viewBox="0 0 16 16"><path d="M15.93 5.77 L15.93 7.43 L15.08 7.59 L14.90 8.13 L15.49 8.77 L14.52 10.11 L13.73 9.74 L13.28 10.08 L13.38 10.94 L11.81 11.45 L11.38 10.69 L10.82 10.69 L10.39 11.45 L8.82 10.94 L8.92 10.08 L8.47 9.74 L7.68 10.11 L6.71 8.77 L7.30 8.13 L7.12 7.59 L6.27 7.43 L6.27 5.77 L7.12 5.61 L7.30 5.07 L6.71 4.43 L7.68 3.09 L8.47 3.46 L8.92 3.12 L8.82 2.26 L10.39 1.75 L10.82 2.51 L11.38 2.51 L11.81 1.75 L13.38 2.26 L13.28 3.12 L13.73 3.46 L14.52 3.09 L15.49 4.43 L14.90 5.07 L15.08 5.61 Z M9.10 6.60 a2.00 2.00 0 1 0 4.00 0 a2.00 2.00 0 1 0 -4.00 0 Z" fill="#444" fill-rule="evenodd"/><path d="M7.94 11.61 L7.94 12.79 L7.35 12.88 L7.20 13.24 L7.55 13.72 L6.72 14.55 L6.24 14.20 L5.88 14.35 L5.79 14.94 L4.61 14.94 L4.52 14.35 L4.16 14.20 L3.68 14.55 L2.85 13.72 L3.20 13.24 L3.05 12.88 L2.46 12.79 L2.46 11.61 L3.05 11.52 L3.20 11.16 L2.85 10.68 L3.68 9.85 L4.16 10.20 L4.52 10.05 L4.61 9.46 L5.79 9.46 L5.88 10.05 L6.24 10.20 L6.72 9.85 L7.55 10.68 L7.20 11.16 L7.35 11.52 Z M4.20 12.20 a1.00 1.00 0 1 0 2.00 0 a1.00 1.00 0 1 0 -2.00 0 Z" fill="#444" fill-rule="evenodd"/></svg></td></tr>
<tr><td style="padding:13.5px 0 0 10px"><span style="letter-spacing:0.031px">diskioreads</span></td><td style="text-align:right;padding:13.5px 0 0">5</td><td style="text-align:right;padding:13.5px 0 0">0</td><td style="text-align:right;padding:13.5px 0 0">0</td><td style="text-align:right;padding:13.5px 5px 0 0">0</td><td><svg width="16" height="16" style="left:67px;top:11px" viewBox="0 0 16 16"><path d="M15.93 5.77 L15.93 7.43 L15.08 7.59 L14.90 8.13 L15.49 8.77 L14.52 10.11 L13.73 9.74 L13.28 10.08 L13.38 10.94 L11.81 11.45 L11.38 10.69 L10.82 10.69 L10.39 11.45 L8.82 10.94 L8.92 10.08 L8.47 9.74 L7.68 10.11 L6.71 8.77 L7.30 8.13 L7.12 7.59 L6.27 7.43 L6.27 5.77 L7.12 5.61 L7.30 5.07 L6.71 4.43 L7.68 3.09 L8.47 3.46 L8.92 3.12 L8.82 2.26 L10.39 1.75 L10.82 2.51 L11.38 2.51 L11.81 1.75 L13.38 2.26 L13.28 3.12 L13.73 3.46 L14.52 3.09 L15.49 4.43 L14.90 5.07 L15.08 5.61 Z M9.10 6.60 a2.00 2.00 0 1 0 4.00 0 a2.00 2.00 0 1 0 -4.00 0 Z" fill="#444" fill-rule="evenodd"/><path d="M7.94 11.61 L7.94 12.79 L7.35 12.88 L7.20 13.24 L7.55 13.72 L6.72 14.55 L6.24 14.20 L5.88 14.35 L5.79 14.94 L4.61 14.94 L4.52 14.35 L4.16 14.20 L3.68 14.55 L2.85 13.72 L3.20 13.24 L3.05 12.88 L2.46 12.79 L2.46 11.61 L3.05 11.52 L3.20 11.16 L2.85 10.68 L3.68 9.85 L4.16 10.20 L4.52 10.05 L4.61 9.46 L5.79 9.46 L5.88 10.05 L6.24 10.20 L6.72 9.85 L7.55 10.68 L7.20 11.16 L7.35 11.52 Z M4.20 12.20 a1.00 1.00 0 1 0 2.00 0 a1.00 1.00 0 1 0 -2.00 0 Z" fill="#444" fill-rule="evenodd"/></svg></td></tr>
<tr><td style="padding:13.5px 0 0 10px"><span style="letter-spacing:0.160px">diskiowrites</span></td><td style="text-align:right;padding:13.5px 0 0">6</td><td style="text-align:right;padding:13.5px 0 0">0</td><td style="text-align:right;padding:13.5px 0 0">0</td><td style="text-align:right;padding:13.5px 5px 0 0">0</td><td><svg width="16" height="16" style="left:67px;top:11px" viewBox="0 0 16 16"><path d="M15.93 5.77 L15.93 7.43 L15.08 7.59 L14.90 8.13 L15.49 8.77 L14.52 10.11 L13.73 9.74 L13.28 10.08 L13.38 10.94 L11.81 11.45 L11.38 10.69 L10.82 10.69 L10.39 11.45 L8.82 10.94 L8.92 10.08 L8.47 9.74 L7.68 10.11 L6.71 8.77 L7.30 8.13 L7.12 7.59 L6.27 7.43 L6.27 5.77 L7.12 5.61 L7.30 5.07 L6.71 4.43 L7.68 3.09 L8.47 3.46 L8.92 3.12 L8.82 2.26 L10.39 1.75 L10.82 2.51 L11.38 2.51 L11.81 1.75 L13.38 2.26 L13.28 3.12 L13.73 3.46 L14.52 3.09 L15.49 4.43 L14.90 5.07 L15.08 5.61 Z M9.10 6.60 a2.00 2.00 0 1 0 4.00 0 a2.00 2.00 0 1 0 -4.00 0 Z" fill="#444" fill-rule="evenodd"/><path d="M7.94 11.61 L7.94 12.79 L7.35 12.88 L7.20 13.24 L7.55 13.72 L6.72 14.55 L6.24 14.20 L5.88 14.35 L5.79 14.94 L4.61 14.94 L4.52 14.35 L4.16 14.20 L3.68 14.55 L2.85 13.72 L3.20 13.24 L3.05 12.88 L2.46 12.79 L2.46 11.61 L3.05 11.52 L3.20 11.16 L2.85 10.68 L3.68 9.85 L4.16 10.20 L4.52 10.05 L4.61 9.46 L5.79 9.46 L5.88 10.05 L6.24 10.20 L6.72 9.85 L7.55 10.68 L7.20 11.16 L7.35 11.52 Z M4.20 12.20 a1.00 1.00 0 1 0 2.00 0 a1.00 1.00 0 1 0 -2.00 0 Z" fill="#444" fill-rule="evenodd"/></svg></td></tr>
<tr><td style="padding:13.5px 0 0 10px"><span style="letter-spacing:0.101px">Downtime</span></td><td style="text-align:right;padding:13.5px 0 0">-4</td><td style="text-align:right;padding:13.5px 0 0"></td><td style="text-align:right;padding:13.5px 0 0"></td><td style="text-align:right;padding:13.5px 5px 0 0"></td><td><svg width="16" height="16" style="left:67px;top:11px" viewBox="0 0 16 16"><path d="M15.93 5.77 L15.93 7.43 L15.08 7.59 L14.90 8.13 L15.49 8.77 L14.52 10.11 L13.73 9.74 L13.28 10.08 L13.38 10.94 L11.81 11.45 L11.38 10.69 L10.82 10.69 L10.39 11.45 L8.82 10.94 L8.92 10.08 L8.47 9.74 L7.68 10.11 L6.71 8.77 L7.30 8.13 L7.12 7.59 L6.27 7.43 L6.27 5.77 L7.12 5.61 L7.30 5.07 L6.71 4.43 L7.68 3.09 L8.47 3.46 L8.92 3.12 L8.82 2.26 L10.39 1.75 L10.82 2.51 L11.38 2.51 L11.81 1.75 L13.38 2.26 L13.28 3.12 L13.73 3.46 L14.52 3.09 L15.49 4.43 L14.90 5.07 L15.08 5.61 Z M9.10 6.60 a2.00 2.00 0 1 0 4.00 0 a2.00 2.00 0 1 0 -4.00 0 Z" fill="#444" fill-rule="evenodd"/><path d="M7.94 11.61 L7.94 12.79 L7.35 12.88 L7.20 13.24 L7.55 13.72 L6.72 14.55 L6.24 14.20 L5.88 14.35 L5.79 14.94 L4.61 14.94 L4.52 14.35 L4.16 14.20 L3.68 14.55 L2.85 13.72 L3.20 13.24 L3.05 12.88 L2.46 12.79 L2.46 11.61 L3.05 11.52 L3.20 11.16 L2.85 10.68 L3.68 9.85 L4.16 10.20 L4.52 10.05 L4.61 9.46 L5.79 9.46 L5.88 10.05 L6.24 10.20 L6.72 9.85 L7.55 10.68 L7.20 11.16 L7.35 11.52 Z M4.20 12.20 a1.00 1.00 0 1 0 2.00 0 a1.00 1.00 0 1 0 -2.00 0 Z" fill="#444" fill-rule="evenodd"/></svg></td></tr>
</tbody></table>
</section>
</body></html>
